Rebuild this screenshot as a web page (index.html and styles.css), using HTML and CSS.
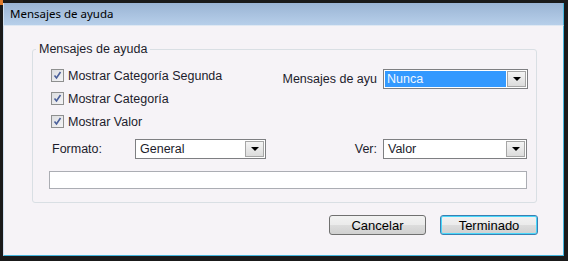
FILE: index.html
```html
<!DOCTYPE html>
<html>
    <head>
        <meta charset="utf-8" />
        <title>Mensajes de ayuda</title>
        <link rel="stylesheet" href="styles.css">
    </head>
    <body>
        <div class="window">
            <div class="titlebar">Mensajes de ayuda</div>
            <div class="content">
                <fieldset class="group">
                    <legend>Mensajes de ayuda</legend>
                    <div class="grid">
                        <label class="check first">
                            <span class="box"><svg width="9" height="9" viewBox="0 0 9 9"><path d="M1.5 4.5 L3.5 7 L7.5 1" fill="none" stroke="#4a5f9a" stroke-width="1.6"/></svg></span>
                            Mostrar Categoría Segunda
                        </label>
                        <span class="field-label top">Mensajes de ayu</span>
                        <div class="combo top">
                            <span class="value selected">Nunca</span>
                            <span class="arrow"></span>
                        </div>
                        <label class="check second">
                            <span class="box"><svg width="9" height="9" viewBox="0 0 9 9"><path d="M1.5 4.5 L3.5 7 L7.5 1" fill="none" stroke="#4a5f9a" stroke-width="1.6"/></svg></span>
                            Mostrar Categoría
                        </label>
                        <label class="check third">
                            <span class="box"><svg width="9" height="9" viewBox="0 0 9 9"><path d="M1.5 4.5 L3.5 7 L7.5 1" fill="none" stroke="#4a5f9a" stroke-width="1.6"/></svg></span>
                            Mostrar Valor
                        </label>
                        <span class="field-label left row">Formato:</span>
                        <div class="combo row">
                            <span class="value">General</span>
                            <span class="arrow"></span>
                        </div>
                        <span class="field-label row">Ver:</span>
                        <div class="combo row">
                            <span class="value">Valor</span>
                            <span class="arrow"></span>
                        </div>
                        <div class="textbox"></div>
                    </div>
                </fieldset>
                <div class="buttons">
                    <button type="button">Cancelar</button>
                    <button type="button" class="default">Terminado</button>
                </div>
            </div>
        </div>
    </body>
</html>
```

FILE: styles.css
```css
html,
body {
    margin: 0;
    width: 568px;
    height: 261px;
    overflow: hidden;
    background-color: #161616;
    font-family: "Liberation Sans", Arial, sans-serif;
    font-size: 12.5px;
    color: #1c1c2c;
}
.window {
    position: relative;
    box-sizing: border-box;
    width: 568px;
    height: 261px;
    display: flex;
    flex-direction: column;
    border-top: 3px solid #1a1a1a;
    border-left: 3px solid #1a1a1a;
    border-right: 4px solid #1a1a1a;
    border-bottom: 5px solid #1a1a1a;
}
.window::before {
    content: "";
    position: absolute;
    left: -3px;
    top: -3px;
    width: 3px;
    height: 5px;
    background-color: #e07a2a;
}
.titlebar {
    height: 22px;
    line-height: 22px;
    padding-left: 6px;
    border-left: 1px solid #cfdff0;
    border-right: 1px solid #44b4dc;
    border-bottom: 1px solid #dfe8f3;
    background: linear-gradient(#9ab4d4, #b7cfea);
    font-family: "Noto Sans", "Open Sans", sans-serif;
    font-size: 11.5px;
    color: #000000;
}
.content {
    flex: 1;
    display: flex;
    flex-direction: column;
    padding: 16px 26px 0 28px;
    background-color: #f6f3f7;
    border-left: 1px solid #cfdff0;
    border-right: 1px solid #44b4dc;
    border-bottom: 1px solid #44b4dc;
}
.group {
    margin: 0;
    width: 505px;
    box-sizing: border-box;
    padding: 7px 9px 13px 16px;
    border: 1px solid #d9dfe4;
    border-radius: 3px;
}
.group legend {
    padding: 0 3px;
    margin-left: -13px;
    line-height: 15px;
}
.grid {
    display: grid;
    grid-template-columns: 86px 131px 1fr 144px;
    grid-template-rows: 23px 23px 23px auto auto;
}
.check {
    grid-column: 1 / 3;
    display: flex;
    align-items: center;
    gap: 4px;
    padding-left: 2px;
    white-space: nowrap;
}
.check.first {
    grid-row: 1;
}
.check.second {
    grid-row: 2;
}
.check.third {
    grid-row: 3;
}
.box {
    box-sizing: border-box;
    width: 13px;
    height: 13px;
    display: flex;
    align-items: center;
    justify-content: center;
    border: 1px solid #8e8f8f;
    background: linear-gradient(135deg, #dcdde0, #f4f4f6);
}
.field-label {
    grid-column: 3;
    text-align: right;
    padding-right: 6px;
    line-height: 20px;
    white-space: nowrap;
}
.field-label.left {
    grid-column: 1;
    text-align: left;
    padding-left: 3px;
}
.field-label.top {
    grid-row: 1;
    margin-top: 5px;
}
.combo {
    box-sizing: border-box;
    height: 20px;
    display: flex;
    align-items: stretch;
    padding: 1px;
    border: 1px solid #7e7f82;
    background-color: #ffffff;
}
.combo.top {
    grid-column: 4;
    grid-row: 1;
    align-self: start;
    margin-top: 5px;
    margin-right: -1px;
}
.combo.row,
.field-label.row {
    grid-row: 4;
    margin-top: 6px;
}
.combo .value {
    flex: 1;
    padding-left: 3px;
    line-height: 16px;
    color: #1c1c2c;
}
.combo .value.selected {
    margin-right: 1px;
    padding-left: 2px;
    background-color: #3399ff;
    color: #eef6ff;
}
.combo .arrow {
    box-sizing: border-box;
    width: 19px;
    display: flex;
    align-items: center;
    justify-content: center;
    border: 1px solid #a6a6a6;
    background: linear-gradient(#f4f4f4, #dcdcdc);
}
.combo .arrow::after {
    content: "";
    border-left: 4px solid transparent;
    border-right: 4px solid transparent;
    border-top: 4px solid #000000;
}
.textbox {
    grid-column: 1 / 5;
    grid-row: 5;
    height: 18px;
    margin-top: 12px;
    box-sizing: border-box;
    border: 1px solid #abadb3;
    background-color: #ffffff;
}
.buttons {
    display: flex;
    justify-content: flex-end;
    gap: 14px;
    margin-top: 12px;
    margin-right: -1px;
}
button {
    box-sizing: border-box;
    width: 97px;
    height: 20px;
    margin: 0;
    padding: 0;
    border: 1px solid #707070;
    border-radius: 3px;
    background: linear-gradient(#f2f2f2 0%, #ebebeb 50%, #dddddd 50%, #d0d0d0 100%);
    font-family: "Liberation Sans", Arial, sans-serif;
    font-size: 13px;
    color: #000000;
}
button.default {
    width: 98px;
    border-color: #3c7fb1;
    box-shadow: inset 0 0 0 1px #48d7fb;
}
```
